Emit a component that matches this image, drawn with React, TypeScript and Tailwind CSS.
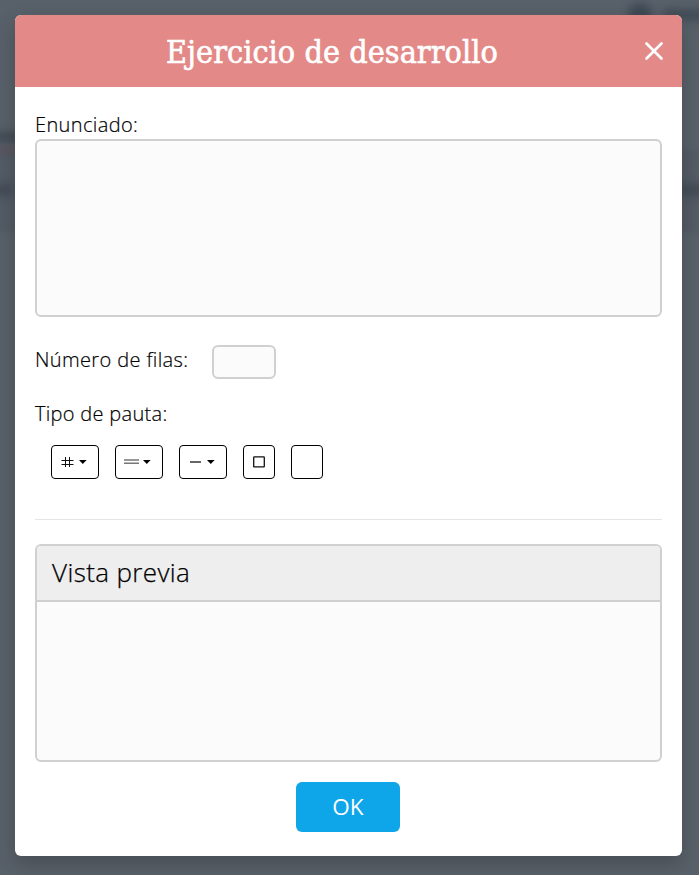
import type { ReactNode } from "react";

function Caret() {
  return (
    <svg width="8" height="4" viewBox="0 0 8 4" className="shrink-0">
      <path d="M0 0h7.6L3.8 4z" fill="#000" />
    </svg>
  );
}

function PatternButton({ label, wide, children }: { label: string; wide?: boolean; children?: ReactNode }) {
  return (
    <button
      aria-label={label}
      className={`flex h-[34px] items-center rounded border border-black bg-white ${wide ? "w-12 pl-[9px]" : "w-8 justify-center"}`}
    >
      {children}
    </button>
  );
}

function Backdrop() {
  return (
    <div className="absolute inset-0 overflow-hidden bg-[#586069]">
      <div className="absolute inset-x-0 top-[150px] h-[82px] bg-[#535b65] blur-[2px]" />
      <div className="absolute -left-3 top-[132px] h-2.5 w-9 bg-[#414954] blur-[4px]" />
      <div className="absolute -left-2 top-[148px] h-1 w-8 bg-[#5d4f5b] blur-[3px]" />
      <div className="absolute -left-3 top-[184px] h-3 w-6 bg-[#434b56] blur-[4px]" />
      <div className="absolute left-[628px] top-1 h-5 w-6 rounded-full bg-[#3d4854] blur-[4px]" />
      <div className="absolute left-[664px] top-[9px] h-3 w-12 bg-[#424c57] blur-[4px]" />
      <div className="absolute left-[680px] top-[184px] h-3 w-8 bg-[#424b55] blur-[4px]" />
    </div>
  );
}

export default function App() {
  return (
    <div className="relative h-[875px] w-[699px] overflow-hidden pl-[15px] pt-[15px] font-['Open_Sans',sans-serif] text-black">
      <Backdrop />
      <div className="relative flex h-[841px] w-[667px] flex-col rounded-md bg-white shadow-[0_8px_20px_rgba(0,0,0,0.2)]">
        <header className="flex h-[72px] shrink-0 items-center rounded-t-md bg-[#e38987] pl-[151px] pr-[18px] text-white">
          <h1 className="w-[340px] whitespace-nowrap pt-px font-['Roboto_Slab','DejaVu_Serif_Condensed','DejaVu_Serif',serif] text-[32px] leading-[42px] tracking-[0.06px] [-webkit-text-stroke:0.6px_white] [font-stretch:condensed]">
            Ejercicio de desarrollo
          </h1>
          <button aria-label="Cerrar" className="ml-auto">
            <svg width="20" height="20" viewBox="0 0 20 20" fill="none" stroke="white" strokeWidth="2.7" strokeLinecap="round">
              <path d="m2.5 2.5 15 15m0-15-15 15" />
            </svg>
          </button>
        </header>

        <main className="flex flex-col px-5 pt-6">
          <label className="h-7 text-[20px] font-light leading-[27px] tracking-[0.37px] [-webkit-text-stroke:0.2px_black]">
            Enunciado:
          </label>
          <textarea className="h-[178px] w-full resize-none rounded-md border-2 border-[#d0d0d0] bg-[#fbfbfb]" />

          <div className="mt-7 flex h-[34px] items-center">
            <label className="w-[177px] whitespace-nowrap pb-[5px] text-[20px] font-light leading-[27px] tracking-[0.37px] [-webkit-text-stroke:0.2px_black]">
              Número de filas:
            </label>
            <input className="h-[34px] w-16 rounded-md border-2 border-[#d0d0d0] bg-[#fbfbfb]" />
          </div>

          <div className="mt-[21px] h-7 text-[20px] font-light leading-[27px] tracking-[0.3px] [-webkit-text-stroke:0.2px_black]">
            Tipo de pauta:
          </div>
          <div className="mt-[17px] flex gap-4 pl-4">
            <PatternButton label="Cuadrícula" wide>
              <svg width="14" height="12" viewBox="0 0 14 12" className="mr-1" fill="none" stroke="#111">
                <path d="M.5 4.5h12M.5 8.5h12M4.5 1v10M8.5 1v10" />
              </svg>
              <Caret />
            </PatternButton>
            <PatternButton label="Doble línea" wide>
              <svg width="15" height="12" viewBox="0 0 15 12" className="-ml-px mr-1" fill="none" stroke="#777" strokeWidth="1.6">
                <path d="M0 4h15M0 7.3h15" />
              </svg>
              <Caret />
            </PatternButton>
            <PatternButton label="Línea" wide>
              <svg width="12" height="12" viewBox="0 0 12 12" className="ml-px mr-[5px]">
                <path d="M0 5h11v2H0z" fill="#666" />
              </svg>
              <Caret />
            </PatternButton>
            <PatternButton label="Recuadro">
              <svg width="12" height="12" viewBox="0 0 12 12" fill="none" stroke="#111" strokeWidth="1.3">
                <rect x="0.7" y="0.9" width="10.6" height="10" rx="0.5" />
              </svg>
            </PatternButton>
            <PatternButton label="En blanco" />
          </div>

          <hr className="mt-10 border-[#e5e5e5]" />

          <section className="mt-6 h-[218px] overflow-hidden rounded-md border-2 border-[#d0d0d0] bg-[#fbfbfb]">
            <h2 className="h-14 border-b-2 border-[#d0d0d0] bg-[#eee] pl-[15px] text-[26px] font-light leading-[53px] tracking-[0.38px] [-webkit-text-stroke:0.25px_black]">
              Vista previa
            </h2>
          </section>

          <button className="mr-px mt-5 h-[50px] w-[104px] self-center rounded-md bg-[#0ea5e9] text-[22.5px] leading-[50px] text-white">
            OK
          </button>
        </main>
      </div>
    </div>
  );
}
